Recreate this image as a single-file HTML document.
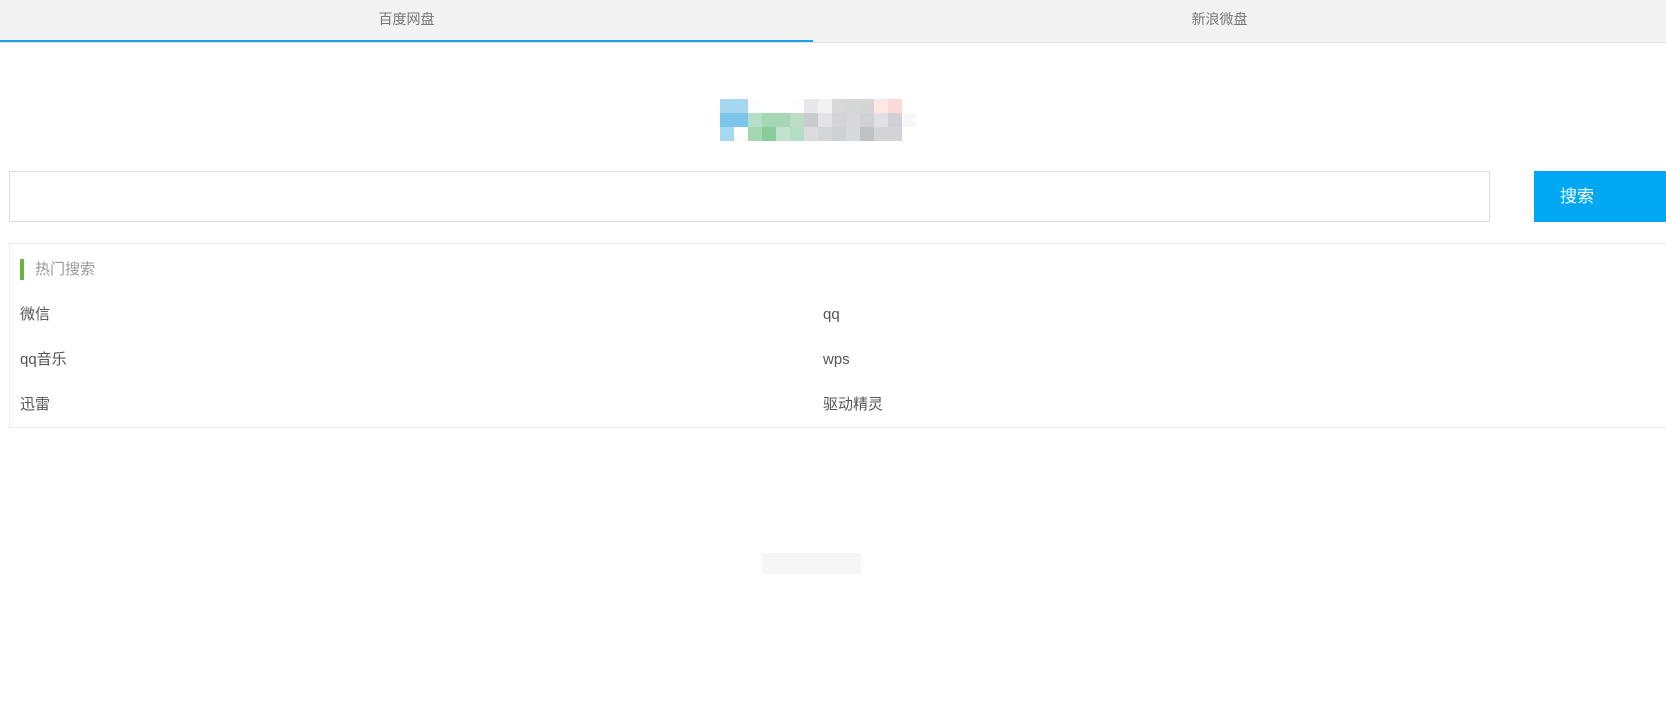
<!DOCTYPE html><html><head><meta charset="utf-8"><style>
body{margin:0;width:1666px;height:723px;overflow:hidden;background:#fff;font-family:"Liberation Sans","Noto Sans CJK SC",sans-serif;position:relative}
.a{position:absolute}
.tabs{left:0;top:0;width:1666px;height:42px;background:#f2f2f2;border-bottom:1px solid #e4e4e4}
.tab{top:0;height:42px;line-height:38px;font-size:14px;color:#777;text-align:center;width:813px}
.grid{left:720px;top:99px;display:grid;grid-template-columns:repeat(14,14px);grid-auto-rows:14px}
.it{font-size:15px;color:#555;line-height:20px}
</style></head><body>
<div class="a tabs"></div>
<div class="a tab" style="left:0">百度网盘</div>
<div class="a tab" style="left:813px">新浪微盘</div>
<div class="a" style="left:0;top:40px;width:813px;height:2px;background:#1da1e6"></div>
<div class="a grid">
<i style="background:#a5d7f0"></i><i style="background:#a5d7f0"></i><i style="background:#fdfefe"></i><i></i><i></i><i style="background:#fdfdfd"></i><i style="background:#e8e8ea"></i><i style="background:#f2f2f2"></i><i style="background:#d8d8d8"></i><i style="background:#d5d6d6"></i><i style="background:#d5d5d5"></i><i style="background:#fde8e6"></i><i style="background:#fcdad8"></i><i></i>
<i style="background:#7cc6ec"></i><i style="background:#7cc6ec"></i><i style="background:#b5dec8"></i><i style="background:#a5d7b5"></i><i style="background:#a5d7b5"></i><i style="background:#bedbc8"></i><i style="background:#cbcbcf"></i><i style="background:#e3e3e5"></i><i style="background:#d3d3d8"></i><i style="background:#d8d8dc"></i><i style="background:#d0d0d5"></i><i style="background:#e0e0e4"></i><i style="background:#d0d0d5"></i><i style="background:#f8f8f8"></i>
<i style="background:#a5d9f0"></i><i style="background:#fdfefe"></i><i style="background:#a5d7b0"></i><i style="background:#88cc9c"></i><i style="background:#bfe3cc"></i><i style="background:#b3dec4"></i><i style="background:#dcdcdd"></i><i style="background:#d5d6d9"></i><i style="background:#cfd0d4"></i><i style="background:#d8d9dc"></i><i style="background:#c0c1c5"></i><i style="background:#d3d3d8"></i><i style="background:#d3d3d8"></i><i></i>
</div>
<div class="a" style="left:9px;top:171px;width:1479px;height:49px;border:1px solid #ddd"></div>
<div class="a" style="left:1534px;top:171px;width:140px;height:51px;background:#00a8f3;color:#fff;font-size:17px;line-height:51px;padding-left:26px;box-sizing:border-box">搜索</div>
<div class="a" style="left:9px;top:243px;width:1700px;height:183px;border:1px solid #eee"></div>
<div class="a" style="left:20px;top:259px;width:4px;height:21px;background:#6db33f"></div>
<div class="a" style="left:35px;top:260px;font-size:15px;color:#999;line-height:20px">热门搜索</div>
<div class="a it" style="left:20px;top:305px">微信</div>
<div class="a it" style="left:823px;top:305px">qq</div>
<div class="a it" style="left:20px;top:350px">qq音乐</div>
<div class="a it" style="left:823px;top:350px">wps</div>
<div class="a it" style="left:20px;top:395px">迅雷</div>
<div class="a it" style="left:823px;top:395px">驱动精灵</div>
<div class="a" style="left:762px;top:553px;width:99px;height:21px;background:#f6f6f6"></div>
</body></html>
